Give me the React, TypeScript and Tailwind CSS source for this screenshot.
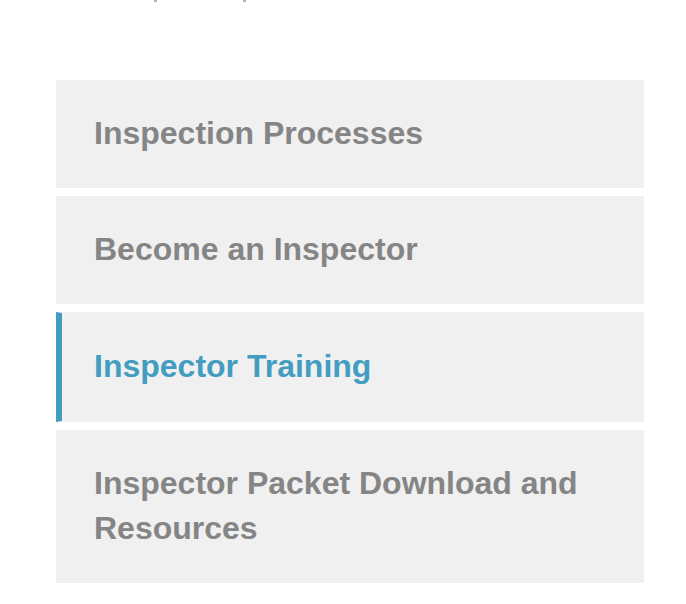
import React from 'react';

const items = [
  { label: 'Inspection Processes', active: false },
  { label: 'Become an Inspector', active: false },
  { label: 'Inspector Training', active: true },
  { label: 'Inspector Packet Download and Resources', active: false },
];

export default function App() {
  return (
    <div className="min-h-[604px] w-[686px] bg-white font-['Liberation_Sans',Arial,sans-serif]">
      {/* descenders of the heading cut off above */}
      <div className="flex h-[80px] items-start">
        <span className="ml-[154px] h-[2px] w-[3px] bg-[#b0b0b0]" />
        <span className="ml-[86px] h-[2px] w-[3px] bg-[#b0b0b0]" />
      </div>
      <nav className="ml-[56px] flex w-[588px] flex-col gap-2">
        {items.map((item) =>
          item.active ? (
            <a
              key={item.label}
              className="block border-y border-l-[6px] border-y-[#f0f0f0] border-l-[#429dc1] bg-[#f0f0f0] pt-[31px] pb-[32px] pl-8 pr-8 text-[32px] font-bold leading-[45px] text-[#429dc1]"
            >
              {item.label}
            </a>
          ) : (
            <a
              key={item.label}
              className="block bg-[#f0f0f0] pt-[31px] pb-[32px] pl-[38px] pr-8 text-[32px] font-bold leading-[45px] text-[#858585]"
            >
              {item.label}
            </a>
          )
        )}
      </nav>
    </div>
  );
}
